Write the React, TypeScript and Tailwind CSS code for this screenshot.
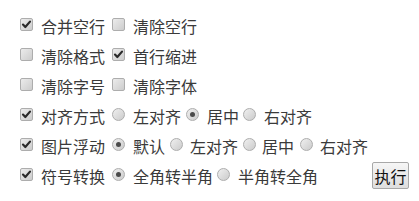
import React from "react";

function Cb({ checked, cls }: { checked?: boolean; cls?: string }) {
  return (
    <span
      className={
        "relative flex h-[13px] w-[13px] shrink-0 items-center justify-center rounded-[2px] border border-[#adadad] bg-gradient-to-br from-[#ececec] to-[#cccccc] " +
        (cls ?? "")
      }
    >
      {checked && (
        <svg width="11" height="11" viewBox="0 0 11 11">
          <path d="M2 5.6 L4.3 8 L9 2.6" fill="none" stroke="#2a2a2a" strokeWidth="2.2" strokeLinecap="round" strokeLinejoin="round" />
        </svg>
      )}
    </span>
  );
}

function Rd({ checked, cls }: { checked?: boolean; cls?: string }) {
  return (
    <span
      className={
        "flex h-[13px] w-[13px] shrink-0 items-center justify-center rounded-full border border-[#adadad] bg-gradient-to-br from-[#f0f0f0] to-[#cbcbcb] " +
        (cls ?? "")
      }
    >
      {checked && <span className="h-[5px] w-[5px] rounded-full bg-[#4a4a4a]" />}
    </span>
  );
}

function T({ children, cls }: { children: React.ReactNode; cls?: string }) {
  return <span className={"mt-[4px] whitespace-nowrap leading-none " + (cls ?? "")}>{children}</span>;
}

export default function App() {
  return (
    <div
      className="h-[201px] w-[419px] bg-white pt-[9px] text-[16px] text-[#3a3a3a]"
      style={{ fontFamily: '"Noto Sans CJK SC", "Noto Sans", sans-serif' }}
    >
      <div className="flex h-[30px] items-center pl-[20px]">
        <Cb checked />
        <T cls="ml-[8px]">合并空行</T>
        <Cb cls="ml-[7px]" />
        <T cls="ml-[8px]">清除空行</T>
      </div>
      <div className="flex h-[30px] items-center pl-[20px]">
        <Cb />
        <T cls="ml-[8px]">清除格式</T>
        <Cb checked cls="ml-[7px]" />
        <T cls="ml-[8px]">首行缩进</T>
      </div>
      <div className="flex h-[30px] items-center pl-[20px]">
        <Cb />
        <T cls="ml-[8px]">清除字号</T>
        <Cb cls="ml-[7px]" />
        <T cls="ml-[8px]">清除字体</T>
      </div>
      <div className="flex h-[30px] items-center pl-[20px]">
        <Cb checked />
        <T cls="ml-[8px]">对齐方式</T>
        <Rd cls="ml-[7px]" />
        <T cls="ml-[8px]">左对齐</T>
        <Rd checked cls="ml-[5px]" />
        <T cls="ml-[8px]">居中</T>
        <Rd cls="ml-[4px]" />
        <T cls="ml-[8px]">右对齐</T>
      </div>
      <div className="flex h-[30px] items-center pl-[20px]">
        <Cb checked />
        <T cls="ml-[8px]">图片浮动</T>
        <Rd checked cls="ml-[7px]" />
        <T cls="ml-[8px]">默认</T>
        <Rd cls="ml-[5px]" />
        <T cls="ml-[7px]">左对齐</T>
        <Rd cls="ml-[5px]" />
        <T cls="ml-[6px]">居中</T>
        <Rd cls="ml-[6px]" />
        <T cls="ml-[7px]">右对齐</T>
      </div>
      <div className="flex h-[30px] items-center pl-[20px]">
        <Cb checked />
        <T cls="ml-[8px]">符号转换</T>
        <Rd checked cls="ml-[7px]" />
        <T cls="ml-[8px]">全角转半角</T>
        <Rd cls="ml-[4px]" />
        <T cls="ml-[8px]">半角转全角</T>
        <button className="ml-[54px] mt-[3px] flex h-[27px] w-[37px] items-center justify-center rounded-[2px] border border-[#a8a8a8] bg-gradient-to-b from-[#f6f6f6] to-[#dedede] text-[16px] leading-none text-[#111]">
          执行
        </button>
      </div>
    </div>
  );
}
